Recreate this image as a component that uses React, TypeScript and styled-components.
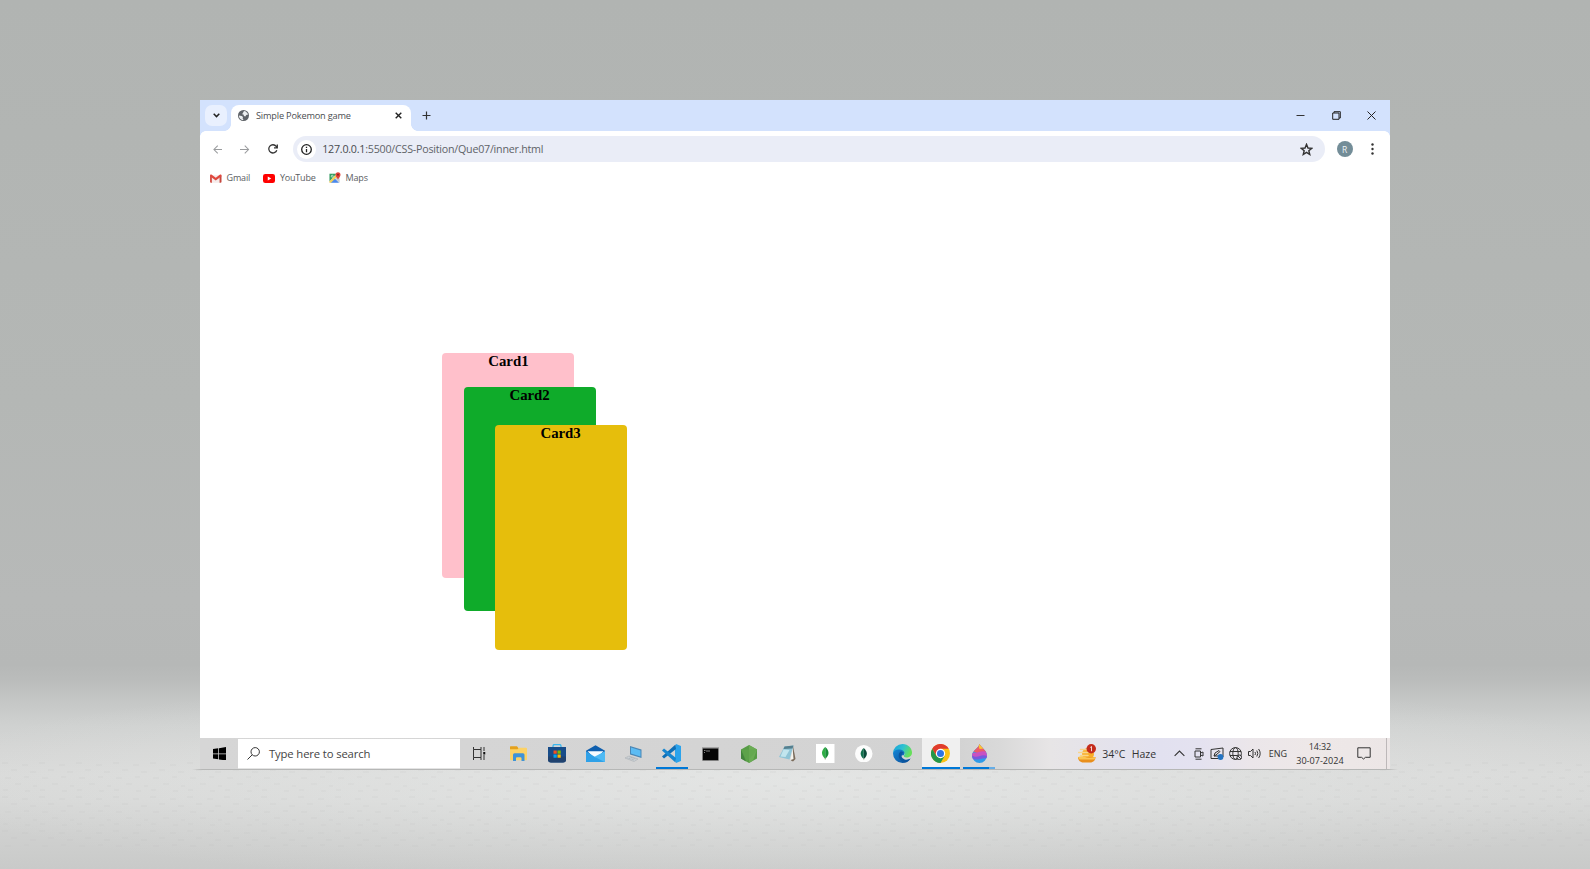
import React from 'react';
import styled, { createGlobalStyle } from 'styled-components';

const GlobalStyle = createGlobalStyle`
  * { box-sizing: border-box; }
  body { margin: 0; background: #b4b6b5; overflow: hidden; font-family: "Open Sans", "Noto Sans", sans-serif; }
  svg { display: block; flex: none; }
`;

const Backdrop = styled.main`
  position: relative;
  width: 1590px;
  height: 869px;
  padding: 100px 200px 0;
  background:
    radial-gradient(ellipse 900px 110px at 50% 780px, rgba(236, 238, 237, 0.55), rgba(236, 238, 237, 0) 100%),
    linear-gradient(#b1b4b2 0, #b4b7b5 400px, #b7b9b8 600px, #b6b8b7 665px, #bbbdbc 682px, #c5c7c6 702px, #cfd1d0 725px, #d5d6d5 750px, #d9dad9 775px, #d7d8d7 800px, #cfd0cf 835px, #c9cac9 869px);
`;

const Texture = styled.svg`
  position: absolute;
  left: 0;
  top: 760px;
`;

const Window = styled.section`
  position: relative;
  display: flex;
  flex-direction: column;
  width: 1190px;
  height: 669px;
  background: #fff;
`;

const TabStrip = styled.header`
  display: flex;
  height: 31px;
  flex: none;
  padding-left: 5px;
  background: #d3e2fd;
`;

const TabSearch = styled.button`
  display: grid;
  place-items: center;
  width: 22px;
  height: 21px;
  margin: 5px 4px 0 0;
  padding: 0;
  border: 0;
  border-radius: 7px;
  background: #e9f0fe;
`;

const Tab = styled.div`
  position: relative;
  display: flex;
  align-items: center;
  width: 180px;
  height: 26.5px;
  margin-top: 4.5px;
  padding: 0 9px 4px 7px;
  border-radius: 8px 8px 0 0;
  background: #fff;
  &::before, &::after {
    content: "";
    position: absolute;
    bottom: 0;
    width: 7px;
    height: 7px;
  }
  &::before { left: -7px; background: radial-gradient(circle at 0 0, transparent 6.6px, #fff 7.2px); }
  &::after { right: -7px; background: radial-gradient(circle at 100% 0, transparent 6.6px, #fff 7.2px); }
`;

const Label = styled.span<{ $size: number; $gap?: number; $color?: string }>`
  font-size: ${p => p.$size}px;
  font-weight: 400;
  letter-spacing: ${p => p.$gap ?? 0}px;
  color: ${p => p.$color ?? '#333'};
  line-height: 14px;
  white-space: nowrap;
`;

const TabTitle = styled(Label)`
  flex: 1;
  margin-left: 7px;
`;

const NewTab = styled.div`
  margin: 11px 0 0 11px;
`;

const WindowButtons = styled.div`
  display: flex;
  gap: 26.5px;
  margin: 11px 14px 0 auto;
`;

const Toolbar = styled.nav`
  position: relative;
  display: flex;
  align-items: center;
  height: 36px;
  flex: none;
  padding: 0 16px 0 12.5px;
  background: #fff;
  &::before, &::after {
    content: "";
    position: absolute;
    top: 0;
    width: 6px;
    height: 6px;
  }
  &::before { left: 0; background: radial-gradient(circle at 100% 100%, transparent 5.6px, #d3e2fd 6.2px); }
  &::after { right: 0; background: radial-gradient(circle at 0 100%, transparent 5.6px, #d3e2fd 6.2px); }
`;

const NavButtons = styled.div`
  display: flex;
  align-items: center;
  gap: 18px;
  flex: none;
  width: 80.5px;
`;

const AddressBar = styled.div`
  display: flex;
  align-items: center;
  flex: none;
  width: 1032px;
  height: 26px;
  padding: 0 12.5px 0 4px;
  border-radius: 13px;
  background: #eaedf7;
`;

const SiteInfo = styled.div`
  display: grid;
  place-items: center;
  width: 19px;
  height: 19px;
  margin-right: 6.2px;
  border-radius: 50%;
  background: #fff;
`;

const Url = styled(Label)`
  flex: 1;
`;

const Avatar = styled.div`
  display: grid;
  place-items: center;
  flex: none;
  width: 16px;
  height: 16px;
  margin-left: 11.5px;
  border-radius: 50%;
  background: #738d98;
  color: #eef3f5;
  font-size: 8.5px;
  line-height: 9px;
`;

const MenuDots = styled.div`
  margin-left: auto;
`;

const Bookmarks = styled.div`
  display: flex;
  height: 22px;
  flex: none;
  padding-left: 10px;
`;

const Bookmark = styled.div<{ $width: number }>`
  display: flex;
  align-items: center;
  gap: 5px;
  width: ${p => p.$width}px;
`;

const Page = styled.article`
  position: relative;
  flex: 1;
`;

const Card = styled.div<{ $x: number; $y: number; $color: string }>`
  position: absolute;
  left: ${p => p.$x}px;
  top: ${p => p.$y}px;
  width: 132px;
  height: 224.6px;
  border-radius: 4px;
  background: ${p => p.$color};
  color: #000;
  font: bold 14.8px/17px "Liberation Serif", serif;
  text-align: center;
`;

const Taskbar = styled.footer`
  position: relative;
  display: flex;
  height: 31px;
  flex: none;
  background: linear-gradient(90deg, #d6d6d6 0, #d3d3d3 760px, #d9d9d9 800px, #e7e5e6 850px, #e5e3ea 890px, #e2e1f0 960px, #e4e2f0 1000px, #ebe6ea 1050px, #eee8e8 1110px, #ece6e6 1190px);
  &::after {
    content: "";
    position: absolute;
    left: -8px;
    right: -8px;
    top: 31px;
    height: 1px;
    background: linear-gradient(90deg, transparent, #b6b7b6 10px, #b6b7b6 calc(100% - 10px), transparent);
  }
`;

const StartButton = styled.div`
  display: grid;
  place-items: center;
  width: 38px;
`;

const SearchBox = styled.div`
  display: flex;
  align-items: center;
  gap: 9px;
  width: 222px;
  height: 30px;
  margin-top: 1px;
  padding: 0 0 0 9px;
  border-bottom: 1px solid #e4e4e4;
  background: #fff;
`;

const Apps = styled.div`
  display: flex;
  margin-left: 0.5px;
`;

const AppCell = styled.div<{ $open?: boolean; $active?: boolean; $multiple?: boolean }>`
  position: relative;
  display: grid;
  place-items: center;
  width: 38.45px;
  height: 31px;
  background: ${p => (p.$active ? '#f0f0f0' : 'transparent')};
  &::after {
    content: "";
    display: ${p => (p.$open ? 'block' : 'none')};
    position: absolute;
    left: ${p => (p.$active ? 0 : 3)}px;
    right: ${p => (p.$active ? 0 : p.$multiple ? 10 : 3)}px;
    bottom: 0;
    height: 2px;
    background: #0078d7;
  }
`;

const SecondWindow = styled.i`
  position: absolute;
  z-index: 1;
  right: 4px;
  bottom: 0;
  width: 6px;
  height: 2px;
  background: #66ade6;
`;

const Tray = styled.div`
  display: flex;
  align-items: center;
  flex: 1;
  margin-left: 79px;
`;

const Weather = styled.div`
  display: flex;
  align-items: center;
  gap: 6.5px;
  width: 96.5px;
`;

const TrayIcons = styled.div`
  display: flex;
  align-items: center;
  gap: 5.6px;
  width: 94.5px;
`;

const Clock = styled.div`
  display: flex;
  flex-direction: column;
  align-items: center;
  width: 49px;
  margin: 0 12.5px 0 8.5px;
`;

const ShowDesktop = styled.div`
  align-self: stretch;
  width: 4px;
  margin-left: auto;
  border-left: 1px solid #bdb8b9;
`;

const Svg = ({ w, h = w, box, children, ...rest }: { w: number; h?: number; box: string } & React.SVGProps<SVGSVGElement>) => (
  <svg width={w} height={h} viewBox={box} fill="none" {...rest}>{children}</svg>
);

const Chevron = styled.div`
  margin-right: 3.2px;
`;

const Globe = () => (
  <Svg w={11} box="0 0 24 24">
    <circle cx="12" cy="12" r="12" fill="#5f6368" />
    <path d="M13 2c4 0 8 4 9 8l-4 1-2 3-3-1-1-3-3-1 2-3z" fill="#eceef0" />
    <path d="M2 12l6 1 3 2-1 3 2 4C6 22 2 17 2 12z" fill="#eceef0" />
  </Svg>
);

const GmailIcon = () => (
  <Svg w={11.5} h={9} box="0 0 24 18">
    <path d="M2 2h20v16H2z" fill="#f6eceb" />
    <path d="M0 2v14q0 2 2 2h2V6z" fill="#d5554c" />
    <path d="M24 2v14q0 2-2 2h-2V6z" fill="#c5483f" />
    <path d="M0 3Q0-.5 3 .8l9 6.700 9-6.700q3-1.300 3 2.200v1.500L12 13 0 4.500z" fill="#e0483e" />
  </Svg>
);

const YoutubeIcon = () => (
  <Svg w={12} h={9} box="0 0 24 18">
    <rect width="24" height="18" rx="4.500" fill="#f00" />
    <path d="M9.500 5v8l7-4z" fill="#fff" />
  </Svg>
);

const MapsIcon = () => (
  <Svg w={12} h={11.5} box="0 0 24 22">
    <path d="M1 3h20v18H1z" fill="#dfe3e6" />
    <path d="M1 3h14L1 18z" fill="#34a060" />
    <path d="M3 21l8-9 9 9z" fill="#4a88ee" />
    <path d="M1 18L14 5l3 3L4 21H1z" fill="#f2cf58" />
    <path d="M13 13l8 8v-8l-4-4z" fill="#c7cbd0" />
    <circle cx="6.500" cy="8" r="2" stroke="#d9efe0" strokeWidth="1.500" />
    <path d="M18 0a5 5 0 0 1 5 5c0 4-5 9-5 9s-5-5-5-9a5 5 0 0 1 5-5z" fill="#e0443a" />
    <circle cx="18" cy="5" r="1.800" fill="#8a1d18" />
  </Svg>
);

const WindowsLogo = () => (
  <Svg w={13} h={13.5} box="0 0 26 27">
    <path d="M0 4l10.500-1.500V13H0zM12 2.300L26 0v13H12zM0 14.300h10.500v10.300L0 23zM12 14.300h14V27l-14-2.200z" fill="#000" />
  </Svg>
);

const TaskViewIcon = () => (
  <Svg w={13} h={13} box="0 0 26 26" stroke="#333" strokeWidth="2">
    <path d="M1 0v5h15V0M1 26v-5h15v5M1 5v16M16 5v16M22 0v8M22 16v10" />
    <path d="M20.500 10h4v5h-4z" fill="#111" stroke="none" />
  </Svg>
);

const ExplorerIcon = () => (
  <Svg w={17} h={15.5} box="0 0 34 30">
    <path d="M0 1q0-1 1-1h13l3 4v6H0z" fill="#e5a11c" />
    <path d="M0 6h15l3-3h14q2 0 2 2v21q0 2-2 2H2q-2 0-2-2z" fill="#fcd266" />
    <path d="M6 30V17q0-3 3-3h17q3 0 3 3v13h-6v-6q0-2-2-2h-7q-2 0-2 2v6z" fill="#3f93d8" />
  </Svg>
);

const StoreIcon = () => (
  <Svg w={18} h={19} box="0 0 36 38">
    <path d="M10 8V4q0-3 3-3h10q3 0 3 3v4" stroke="#3ab8ef" strokeWidth="2.500" />
    <path d="M0 6h36v25q0 6-6 6H6q-6 0-6-6z" fill="#174c89" />
    <path d="M0 25h36v6q0 6-6 6H6q-6 0-6-6z" fill="#20426f" />
    <path d="M11 13h6.500v6.500H11z" fill="#f25022" />
    <path d="M19 13h6.500v6.500H19z" fill="#7fba00" />
    <path d="M11 21h6.500v6.500H11z" fill="#00a4ef" />
    <path d="M19 21h6.500v6.500H19z" fill="#ffb900" />
  </Svg>
);

const MailIcon = () => (
  <Svg w={19} h={17.5} box="0 0 38 34">
    <path d="M0 11L19 0l19 11v8H0z" fill="#0f5fae" />
    <path d="M3 12h32l-12 12h-8z" fill="#f7fbff" />
    <path d="M0 12l19 12 19-12v22H0z" fill="#2fa1e8" />
    <path d="M38 12v22L17 23z" fill="#4fbaf4" />
  </Svg>
);

const LaptopIcon = () => (
  <Svg w={17} h={16} box="0 0 34 32">
    <path d="M10 0l23 7v17L10 17z" fill="#4b87b5" />
    <path d="M12 3l19 6v12l-19-6z" fill="#5cbcf4" />
    <path d="M0 24l8-4 18 6-8 5z" fill="#cfd4d8" stroke="#a2a9af" strokeWidth="1" />
    <path d="M5 24l13 4M9 22l12 4" stroke="#858e95" strokeDasharray="2 1" />
  </Svg>
);

const VsCodeIcon = () => (
  <Svg w={19} h={19} box="0 0 38 38">
    <path d="M28 0l10 4v30l-10 4-2-9V10z" fill="#2ba3ec" />
    <path d="M28 10L4 29l-4-4L27 1z" fill="#0e6fb7" />
    <path d="M28 28L4 9l-4 4 27 24z" fill="#1686d0" />
  </Svg>
);

const TerminalIcon = () => (
  <Svg w={17} h={14} box="0 0 34 28">
    <path d="M0 0h34v28H0z" fill="#a6a6a6" />
    <path d="M1.500 3h31v23.500h-31z" fill="#050505" />
    <path d="M4 7h3M8 8h8M4 11h2" stroke="#aaa" strokeWidth="1.500" />
  </Svg>
);

const NodeIcon = () => (
  <Svg w={16} h={18} box="0 0 32 36">
    <path d="M16 0l16 9v18l-16 9-16-9V9z" fill="#579c46" />
    <path d="M16 0l16 9-8 22-8 5z" fill="#6bac55" />
    <path d="M0 9l10 24-10-6z" fill="#43853d" />
    <path d="M0 9L32 9 12 34z" fill="#61a64d" opacity=".6" />
  </Svg>
);

const NotepadIcon = () => (
  <Svg w={17} h={17} box="0 0 34 34">
    <path d="M28 2l5 26-5 5-4-2z" fill="#7b6c5b" />
    <path d="M27 4l2 24-6 2z" fill="#f5f5f0" />
    <path d="M11 3l18-2-8 28-21-5z" fill="#8fc4d6" />
    <path d="M11 3l18-2-2 6-18 1z" fill="#557f8e" />
    <path d="M9 9l12 1-8 14-10-1z" fill="#c2e5ee" />
  </Svg>
);

const Leaf = ({ left, right }: { left: string; right: string }) => (
  <>
    <path d="M18 6c-8 7-9 15 0 23z" fill={left} />
    <path d="M18 6c8 7 9 15 0 23z" fill={right} />
    <path d="M18 27v4" stroke="#a9a68a" strokeWidth="1.200" />
  </>
);

const MongoSquare = () => (
  <Svg w={18.5} h={19} box="0 0 36 37"><path d="M0 0h36v37H0z" fill="#fff" /><Leaf left="#2fae45" right="#178c36" /></Svg>
);

const MongoRound = () => (
  <Svg w={17.5} box="0 0 36 36"><circle cx="18" cy="18" r="18" fill="#fcfcfc" /><Leaf left="#11704c" right="#0a4a38" /></Svg>
);

const EdgeIcon = () => (
  <Svg w={19} box="0 0 38 38">
    <defs>
      <linearGradient id="edgeTop" x1="0" y1="0" x2="1" y2=".4"><stop stopColor="#159fdc" /><stop offset=".55" stopColor="#2fc2d0" /><stop offset="1" stopColor="#66df59" /></linearGradient>
      <linearGradient id="edgeLow" x1="0" y1="0" x2="1" y2="1"><stop stopColor="#1487d8" /><stop offset="1" stopColor="#0c4c95" /></linearGradient>
    </defs>
    <path d="M0 19A19 19 0 0 1 19 0C31 0 38 9 38 17c0 7-5 10-11 10-4 0-6-2-5-4 3-4 0-9-6-9-8 0-15 3-16 5z" fill="url(#edgeTop)" />
    <path d="M0 19c1-7 8-9 14-8 7 1 11 6 8 10l-1 2c-3-1-7 1-6 5 2 5 11 6 20 1-3 6-9 9-16 9A19 19 0 0 1 0 19z" fill="url(#edgeLow)" />
    <path d="M15 15c-5 4-6 15 6 21 6 1 12-4 14-7-7 5-18 2-18-6 0-3 2-5 4-5-1-2-3-3-6-3z" fill="#0b559f" />
  </Svg>
);

const ChromeIcon = () => (
  <Svg w={19} box="0 0 38 38">
    <circle cx="19" cy="19" r="19" fill="#fbc116" />
    <path d="M2.500 9.500A19 19 0 0 1 35.500 9.500H19L10.800 23.800z" fill="#e03b2e" />
    <path d="M2.500 9.500A19 19 0 0 0 19 38l8.200-14.200-8.200 4.700-8.200-4.700z" fill="#23964b" />
    <circle cx="19" cy="19" r="9.300" fill="#fff" />
    <circle cx="19" cy="19" r="7" fill="#2f74e4" />
  </Svg>
);

const PaintIcon = () => (
  <Svg w={15} h={19} box="0 0 30 38">
    <defs>
      <clipPath id="drop"><path d="M15 0c3 7 15 13 15 23a15 15 0 0 1-30 0C0 13 13 9 15 0z" /></clipPath>
    </defs>
    <g clipPath="url(#drop)">
      <path d="M0 0h30v38H0z" fill="#2f9be8" />
      <path d="M0 0h30v16L15 20 0 14z" fill="#ee5b68" />
      <path d="M12 0h8l4 9-9 1z" fill="#fbc62f" />
      <path d="M0 16c10 6 18-6 30 1v9c-10-5-18 5-30-1z" fill="#c851c2" />
      <path d="M0 23c12 7 18-4 30 1v5c-10-3-16 5-30 1z" fill="#7858dc" />
    </g>
  </Svg>
);

const WeatherIcon = () => (
  <Svg w={18} h={19} box="0 0 36 38">
    <circle cx="20" cy="20" r="12" fill="#f9ad28" />
    <path d="M5 11h15M1 17h19M5 23h15" stroke="#f9d58b" strokeWidth="3" strokeLinecap="round" />
    <path d="M0 26h35c0 6-4 11-11 11H11C4 37 0 32 0 26z" fill="#e98f1c" />
    <path d="M0 26q8-3 14 0t21 0l-2 5H3z" fill="#fbc552" />
    <circle cx="26.500" cy="9.500" r="9.500" fill="#c42b1c" />
    <path d="M24.500 7l2.500-2v9.500" stroke="#fff" strokeWidth="1.600" />
  </Svg>
);

const ink = { stroke: '#333', strokeWidth: 1 };

const TrayGlyphs = () => (
  <TrayIcons>
    <Chevron><Svg w={11} h={6.5} box="0 0 10 6" {...ink}><path d="M.5 5.500l4.500-4.500 4.500 4.500" /></Svg></Chevron>
    <Svg w={10} h={12} box="-.5 0 10 12" {...ink}><path d="M1 .8h6M1 11.200h6M.5 3h5.500v6H.5zM6 5l2.500-1v4l-2.500-1" /></Svg>
    <Svg w={14} h={13} box="0 0 14 13" {...ink}>
      <path d="M1 2.500l12-1.500v9M1 2.500v9h7M4 9l1-3 4-2.500 1 1-4 3.500zM4 9h5" />
      <circle cx="10.500" cy="10" r="2.900" fill="#2473c2" stroke="none" />
    </Svg>
    <Svg w={13} h={13} box="0 0 13 13" {...ink}>
      <circle cx="6.500" cy="6.500" r="5.900" /><ellipse cx="6.500" cy="6.500" rx="2.700" ry="5.900" /><path d="M1 4.500h11M1 8.500h11" />
      <circle cx="10.300" cy="10.300" r="2.300" fill="#e6e3ee" /><path d="M8.700 8.700l3.200 3.200" />
    </Svg>
    <Svg w={13} h={11} box="0 0 13 11" {...ink}><path d="M.5 3.500h2L5 1v9L2.500 7.500h-2zM7 4q1 1.500 0 3M8.800 2.500q2 3 0 6M10.600 1q3.200 4.500 0 9" /></Svg>
  </TrayIcons>
);

const cards = [
  { name: 'Card1', x: 242.4, y: 164.4, color: '#ffc0cb' },
  { name: 'Card2', x: 263.6, y: 197.8, color: '#0fab2a' },
  { name: 'Card3', x: 294.6, y: 236, color: '#e6be0c' },
];

const apps: { Icon: React.FC; open?: boolean; active?: boolean; second?: boolean }[] = [
  { Icon: TaskViewIcon }, { Icon: ExplorerIcon }, { Icon: StoreIcon }, { Icon: MailIcon }, { Icon: LaptopIcon },
  { Icon: VsCodeIcon, open: true }, { Icon: TerminalIcon }, { Icon: NodeIcon }, { Icon: NotepadIcon },
  { Icon: MongoSquare }, { Icon: MongoRound }, { Icon: EdgeIcon },
  { Icon: ChromeIcon, open: true, active: true }, { Icon: PaintIcon, open: true, second: true },
];

export default function App() {
  return (
    <Backdrop>
      <GlobalStyle />
      <Texture width="1590" height="90">
        <defs>
          <pattern id="weave" width="37" height="34" patternUnits="userSpaceOnUse">
            <path d="M2 3h6M22 5h6M11 10h6M30 12h6M5 18h6M24 17h5M15 24h6M33 26h4M3 30h5M25 31h5" stroke="#b9bcba" strokeWidth=".7" fill="none" opacity=".32" />
          </pattern>
        </defs>
        <rect width="1590" height="90" fill="url(#weave)" />
      </Texture>
      <Window>
        <TabStrip>
          <TabSearch><Svg w={7} h={5} box="0 0 7 5" stroke="#222" strokeWidth="1.5"><path d="M.7.8l2.800 2.800L6.300.8" /></Svg></TabSearch>
          <Tab>
            <Globe />
            <TabTitle $size={9.2} $gap={-0.18} $color="#4a4d51">Simple Pokemon game</TabTitle>
            <Svg w={7} box="0 0 7 7" stroke="#222" strokeWidth="1.4"><path d="M.7.7l5.600 5.600M6.300.7L.7 6.300" /></Svg>
          </Tab>
          <NewTab><Svg w={9} box="0 0 9 9" stroke="#333" strokeWidth="1.2"><path d="M4.500.5v8M.5 4.500h8" /></Svg></NewTab>
          <WindowButtons>
            <Svg w={9} box="0 0 9 9" stroke="#333"><path d="M.5 4.500h8" /></Svg>
            <Svg w={9} box="0 0 9 9" stroke="#222"><path d="M.7 2h6.300v6.300H.7zM2 2V.7h6.300V7H7" /></Svg>
            <Svg w={9} box="0 0 9 9" stroke="#222"><path d="M.5.5l8 8M8.500.5l-8 8" /></Svg>
          </WindowButtons>
        </TabStrip>
        <Toolbar>
          <NavButtons>
            <Svg w={9.5} h={9} box="0 0 10 9" stroke="#9a9c9e" strokeWidth="1.1"><path d="M10 4.500H1M5 .5l-4 4 4 4" /></Svg>
            <Svg w={9.5} h={9} box="0 0 10 9" stroke="#9a9c9e" strokeWidth="1.1"><path d="M0 4.500h9M5 .5l4 4-4 4" /></Svg>
            <Svg w={10} box="0 0 10 10" stroke="#333" strokeWidth="1.3"><path d="M8.800 6.200A4.100 4.100 0 1 1 8.200 2.400L9.200 3.600M9.300.4v3.400H6" /></Svg>
          </NavButtons>
          <AddressBar>
            <SiteInfo><Svg w={11} box="0 0 11 11" stroke="#222" strokeWidth="1.3"><circle cx="5.500" cy="5.500" r="4.800" /><path d="M5.500 5v3.200M5.500 2.700V4" /></Svg></SiteInfo>
            <Url $size={10.7} $gap={-0.23} $color="#5f6368"><Label $size={10.7} $gap={-0.23} $color="#474a4e">127.0.0.1</Label>:5500/CSS-Position/Que07/inner.html</Url>
            <Svg w={13} h={13} box="0 0 24 24" stroke="#333" strokeWidth="2.6"><path d="M12 2.500l2.700 6.700 7 .5-5.400 4.500 1.700 7L12 17.400l-6 3.800 1.700-7-5.400-4.500 7-.5z" /></Svg>
          </AddressBar>
          <Avatar>R</Avatar>
          <MenuDots><Svg w={3} h={12} box="0 0 3 12"><g fill="#333"><circle cx="1.500" cy="1.500" r="1.200" /><circle cx="1.500" cy="6" r="1.200" /><circle cx="1.500" cy="10.500" r="1.200" /></g></Svg></MenuDots>
        </Toolbar>
        <Bookmarks>
          <Bookmark $width={53}><GmailIcon /><Label $size={9} $gap={-0.15} $color="#5a5d61">Gmail</Label></Bookmark>
          <Bookmark $width={65.5}><YoutubeIcon /><Label $size={9} $gap={-0.2} $color="#5a5d61">YouTube</Label></Bookmark>
          <Bookmark $width={60}><MapsIcon /><Label $size={9} $gap={-0.15} $color="#5a5d61">Maps</Label></Bookmark>
        </Bookmarks>
        <Page>
          {cards.map(c => <Card key={c.name} $x={c.x} $y={c.y} $color={c.color}>{c.name}</Card>)}
        </Page>
        <Taskbar>
          <StartButton><WindowsLogo /></StartButton>
          <SearchBox>
            <Svg w={13} box="0 0 13 13" {...ink}><circle cx="8.200" cy="4.800" r="4.200" /><path d="M5.200 7.800L.5 12.500" /></Svg>
            <Label $size={11.3} $gap={-0.14} $color="#444">Type here to search</Label>
          </SearchBox>
          <Apps>
            {apps.map(({ Icon, open, active, second }, i) => (
              <AppCell key={i} $open={open} $active={active} $multiple={second}><Icon />{second && <SecondWindow />}</AppCell>
            ))}
          </Apps>
          <Tray>
            <Weather>
              <WeatherIcon />
              <Label $size={10.5}>34°C</Label>
              <Label $size={10.5}>Haze</Label>
            </Weather>
            <TrayGlyphs />
            <Label $size={9}>ENG</Label>
            <Clock>
              <Label $size={9} $gap={-0.15}>14:32</Label>
              <Label $size={9.1}>30-07-2024</Label>
            </Clock>
            <Svg w={14} h={13} box="0 0 14 13" {...ink}><path d="M.8.8h12.400v9.500H8.500L6.500 12l-2-1.700H.8z" /></Svg>
            <ShowDesktop />
          </Tray>
        </Taskbar>
      </Window>
    </Backdrop>
  );
}
